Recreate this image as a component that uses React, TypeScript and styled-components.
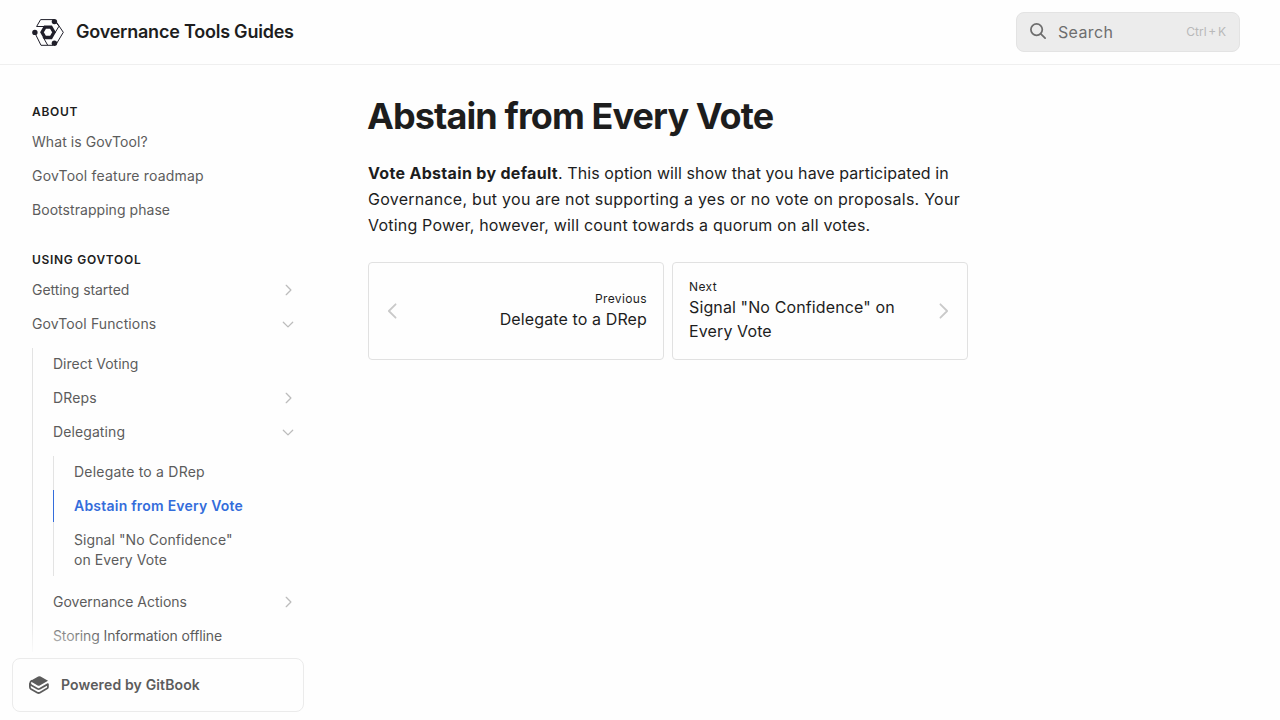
import React from "react";
import styled, { createGlobalStyle, css } from "styled-components";

const GlobalStyle = createGlobalStyle`
  *, *::before, *::after { box-sizing: border-box; }
  html, body { margin: 0; padding: 0; }
  body {
    background: #fefefe;
    color: #1d1d1d;
    font-family: Inter, "Liberation Sans", sans-serif;
    font-size: 16px;
    line-height: 24px;
  }
  h1, h5, p, ul { margin: 0; padding: 0; }
  ul { list-style: none; }
  a { color: inherit; text-decoration: none; }
`;

const Page = styled.div`
  height: 720px;
  display: flex;
  flex-direction: column;
  overflow: hidden;
`;

const Header = styled.header`
  flex: none;
  height: 65px;
  border-bottom: 1px solid #efefef;
  padding: 0 40px 0 32px;
  display: flex;
  align-items: center;
  justify-content: space-between;
`;

const Brand = styled.a`
  display: flex;
  align-items: center;
  gap: 12px;
  font-size: 18px;
  font-weight: 600;
  line-height: 22px;
  letter-spacing: -0.22px;
`;

const SearchButton = styled.button`
  width: 224px;
  height: 40px;
  display: flex;
  align-items: center;
  padding: 0 13px;
  border: 1px solid #e3e3e3;
  border-radius: 8px;
  background: #ececec;
  color: #6e6e6e;
  font: inherit;
  text-align: left;
`;

const SearchLabel = styled.span`
  flex: 1;
  margin-left: 12px;
  letter-spacing: 0.35px;
`;

const Shortcut = styled.span`
  font-size: 12px;
  color: #b9b9b9;
  word-spacing: -1.7px;
`;

const Body = styled.div`
  flex: 1;
  min-height: 0;
  display: flex;
`;

const Sidebar = styled.aside`
  width: 304px;
  flex: none;
  display: flex;
  flex-direction: column;
  padding-bottom: 8px;
`;

const Nav = styled.nav`
  flex: 1;
  min-height: 0;
  overflow: hidden;
  padding: 37px 0 0 32px;
`;

const Group = styled.section`
  & + & { margin-top: 24px; }
`;

const GroupTitle = styled.h5`
  font-size: 12px;
  line-height: 20px;
  font-weight: 600;
  letter-spacing: 0.7px;
  text-transform: uppercase;
  margin-bottom: 4px;
`;

const List = styled.ul`
  display: flex;
  flex-direction: column;
  gap: 2px;
`;

const SubList = styled(List)<{ $depth: number }>`
  margin: 8px 0 8px ${(p) => (p.$depth > 0 ? 20 : 0)}px;
  border-left: 1px solid #e3e3e3;
`;

const NavLink = styled.a<{ $nested?: boolean; $active?: boolean }>`
  display: flex;
  justify-content: space-between;
  align-items: center;
  padding: 6px 9px 6px 0;
  font-size: 14px;
  line-height: 20px;
  color: #5c5c5c;
  ${(p) => p.$nested && css`
    margin-left: -1px;
    padding-left: 20px;
    border-left: 1px solid transparent;
  `}
  ${(p) => p.$active && css`
    color: #346ddb;
    font-weight: 600;
    border-left-color: #346ddb;
  `}
`;

const LinkText = styled.span<{ $tracking?: number }>`
  max-width: 175px;
  letter-spacing: ${(p) => p.$tracking ?? 0}px;
`;

const Footer = styled.div`
  position: relative;
  flex: none;
  margin-left: 12px;

  &::before {
    content: "";
    position: absolute;
    left: 0;
    right: 0;
    bottom: 100%;
    height: 40px;
    background: radial-gradient(ellipse 125px 40px at 0 100%, #fefefe 10%, rgba(254, 254, 254, 0));
  }
`;

const PoweredBy = styled.a`
  display: flex;
  align-items: center;
  gap: 12px;
  height: 54px;
  padding: 0 16px;
  border: 1px solid #ebebeb;
  border-radius: 8px;
  color: #5c5c5c;
  font-size: 14px;
  line-height: 20px;
  font-weight: 600;
  letter-spacing: 0.14px;
`;

const Main = styled.main`
  width: 600px;
  margin-left: 64px;
  padding-top: 29px;
`;

const Title = styled.h1`
  margin-left: -1px;
  font-size: 36px;
  line-height: 45px;
  font-weight: 700;
  letter-spacing: -0.9px;
`;

const Paragraph = styled.p`
  margin-top: 21px;
  line-height: 26px;
  letter-spacing: 0.2px;
`;

const Lead = styled.strong`
  letter-spacing: 0.32px;
`;

const Run = styled.span<{ $tracking: number }>`
  letter-spacing: ${(p) => p.$tracking}px;
`;

const Pager = styled.div`
  display: grid;
  grid-template-columns: 1fr 1fr;
  gap: 8px;
  margin-top: 24px;
`;

const PageCard = styled.a<{ $align: "left" | "right" }>`
  display: flex;
  align-items: center;
  justify-content: space-between;
  height: 98px;
  padding: 0 ${(p) => (p.$align === "left" ? 14 : 16)}px 0 ${(p) => (p.$align === "left" ? 16 : 14)}px;
  border: 1px solid #e1e1e1;
  border-radius: 4px;
  text-align: ${(p) => p.$align};
`;

const CardText = styled.span`
  display: flex;
  flex-direction: column;
  max-width: 220px;
  letter-spacing: 0.12px;
`;

const CardHint = styled.span`
  font-size: 12px;
  line-height: 16px;
  letter-spacing: 0.38px;
`;

const directions = { right: 0, down: 90, left: 180 };

function Chevron({ dir, size = 14, color = "#bcbcbc" }: { dir: keyof typeof directions; size?: number; color?: string }) {
  return (
    <svg width={size} height={size} viewBox="0 0 14 14" fill="none" stroke={color} strokeWidth="1.25" strokeLinecap="round" strokeLinejoin="round">
      <path d="M5.2 2.3 L9.9 7 L5.2 11.7" transform={`rotate(${directions[dir]} 7 7)`} />
    </svg>
  );
}

function Logo() {
  return (
    <svg width="32" height="32" viewBox="0 0 32 32" fill="none" stroke="#1f1e29" strokeWidth="1">
      <path d="M22 3.6 H8.6 L4.6 10.5 H13" />
      <path d="M3.4 18 L9 29.3 H21" />
      <path d="M24 5.5 L31.3 16.3 L24 28.5" />
      <path d="M24 6.5 L27 10.2 L22.5 17.6" />
      <path d="M11 21 L15.6 29" />
      <path d="M13 11.1 H19 L22 16.3 L19 21.5 H13 L10 16.3 Z" strokeWidth="3.3" />
      <g fill="#1f1e29" stroke="none">
        <circle cx="22.4" cy="5.6" r="2.7" />
        <circle cx="2.9" cy="16.4" r="2.7" />
        <circle cx="22.4" cy="27.2" r="2.7" />
      </g>
    </svg>
  );
}

const Glass = styled.svg`
  margin-top: -2px;
`;

function SearchIcon() {
  return (
    <Glass width="16" height="16" viewBox="0 0 16 16" fill="none" stroke="#6e6e6e" strokeWidth="1.75" strokeLinecap="round">
      <circle cx="6.6" cy="6.6" r="5.7" />
      <path d="M10.8 10.8 L15.1 15.1" />
    </Glass>
  );
}

function GitBookIcon() {
  return (
    <svg width="20" height="20" viewBox="0.4 0 20.4 20" fill="none">
      <path d="M9.8 1.3 L2.6 5.4 Q2 6 2.7 6.6 L9.2 10.4 Q10.3 11 11.4 10.4 L19.8 5.6 L12.2 1.3 Q11 0.6 9.8 1.3 Z" fill="#5c5c5c" />
      <path d="M3.6 5.4 C1 6.4 1 9.4 3.2 10.6 L9 13.8 Q10.2 14.5 11.4 13.8 L19.7 9.1 V12.4 Q19.7 13 19.1 13.4 L11.4 17.8 Q10.2 18.5 9 17.8 L2.3 14 Q1.3 13.3 1.3 12 V8.3" stroke="#5c5c5c" strokeWidth="1.8" strokeLinejoin="round" />
    </svg>
  );
}

type Item = { label: string; tracking?: number; active?: boolean; branch?: boolean; children?: Item[] };

const about: Item[] = [
  { label: "What is GovTool?", tracking: 0.08 },
  { label: "GovTool feature roadmap", tracking: 0.18 },
  { label: "Bootstrapping phase", tracking: 0.05 },
];

const using: Item[] = [
  { label: "Getting started", tracking: -0.06, branch: true },
  {
    label: "GovTool Functions",
    tracking: 0.11,
    branch: true,
    children: [
      { label: "Direct Voting" },
      { label: "DReps", tracking: 0.15, branch: true },
      {
        label: "Delegating",
        tracking: 0.1,
        branch: true,
        children: [
          { label: "Delegate to a DRep", tracking: 0.21 },
          { label: "Abstain from Every Vote", tracking: 0.22, active: true },
          { label: 'Signal "No Confidence" on Every Vote', tracking: 0.08 },
        ],
      },
      { label: "Governance Actions", branch: true },
      { label: "Storing Information offline", tracking: -0.12 },
    ],
  },
];

function NavItem({ item, depth }: { item: Item; depth: number }) {
  return (
    <li>
      <NavLink $nested={depth > 0} $active={item.active}>
        <LinkText $tracking={item.tracking}>{item.label}</LinkText>
        {item.branch && <Chevron dir={item.children ? "down" : "right"} />}
      </NavLink>
      {item.children && (
        <SubList $depth={depth}>
          {item.children.map((c) => (
            <NavItem key={c.label} item={c} depth={depth + 1} />
          ))}
        </SubList>
      )}
    </li>
  );
}

export default function App() {
  return (
    <Page>
      <GlobalStyle />
      <Header>
        <Brand>
          <Logo />
          <span>Governance Tools Guides</span>
        </Brand>
        <SearchButton>
          <SearchIcon />
          <SearchLabel>Search</SearchLabel>
          <Shortcut>Ctrl + K</Shortcut>
        </SearchButton>
      </Header>
      <Body>
        <Sidebar>
          <Nav>
            <Group>
              <GroupTitle>About</GroupTitle>
              <List>{about.map((i) => <NavItem key={i.label} item={i} depth={0} />)}</List>
            </Group>
            <Group>
              <GroupTitle>Using GovTool</GroupTitle>
              <List>{using.map((i) => <NavItem key={i.label} item={i} depth={0} />)}</List>
            </Group>
          </Nav>
          <Footer>
            <PoweredBy>
              <GitBookIcon />
              <span>Powered by GitBook</span>
            </PoweredBy>
          </Footer>
        </Sidebar>
        <Main>
          <Title>Abstain from Every Vote</Title>
          <Paragraph>
            <Lead>Vote Abstain by default</Lead>
            <Run $tracking={0.08}>. This option will show that you have participated in </Run>
            <Run $tracking={0.26}>Governance, but you are not supporting a yes or no vote on proposals. Your </Run>
            Voting Power, however, will count towards a quorum on all votes.
          </Paragraph>
          <Pager>
            <PageCard $align="right">
              <Chevron dir="left" size={20} color="#c9c9c9" />
              <CardText>
                <CardHint>Previous</CardHint>
                <span>Delegate to a DRep</span>
              </CardText>
            </PageCard>
            <PageCard $align="left">
              <CardText>
                <CardHint>Next</CardHint>
                <span>Signal "No Confidence" on Every Vote</span>
              </CardText>
              <Chevron dir="right" size={20} color="#c9c9c9" />
            </PageCard>
          </Pager>
        </Main>
      </Body>
    </Page>
  );
}
